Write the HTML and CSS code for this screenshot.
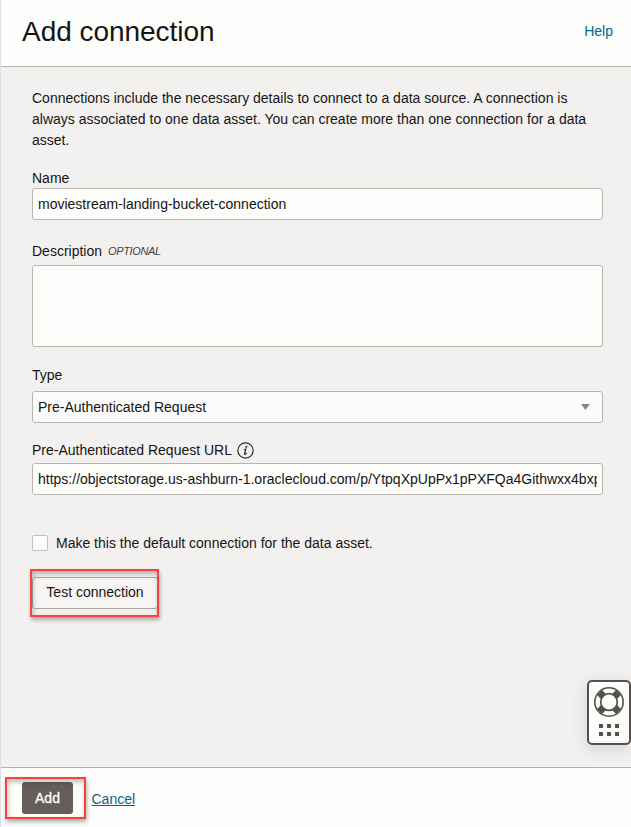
FILE: index.html
```
<!DOCTYPE html>
<html lang="en">
<head>
<meta charset="utf-8">
<title>Add connection</title>
<link rel="stylesheet" href="styles.css">
</head>
<body>
<div class="panel">
  <header class="header">
    <h1 class="title">Add connection</h1>
    <a class="help">Help</a>
  </header>
  <main class="content">
    <p class="intro">Connections include the necessary details to connect to a data source. A connection is always associated to one data asset. You can create more than one connection for a data asset.</p>
    <div class="field field-name">
      <div class="label">Name</div>
      <div class="control"><span class="value">moviestream-landing-bucket-connection</span></div>
    </div>
    <div class="field field-description">
      <div class="label">Description <span class="optional">OPTIONAL</span></div>
      <div class="control area"></div>
    </div>
    <div class="field field-type">
      <div class="label">Type</div>
      <div class="control select"><span class="value">Pre-Authenticated Request</span>
        <svg class="arrow" width="9" height="6" viewBox="0 0 9 6"><path d="M0 0h9L4.5 6z" fill="#85888a"/></svg>
      </div>
    </div>
    <div class="field field-url">
      <div class="label">Pre-Authenticated Request URL
        <svg class="info" width="18" height="18" viewBox="0 0 18 18"><circle cx="8.5" cy="9.5" r="7.7" fill="none" stroke="#312d2a" stroke-width="1.2"/><circle cx="9.4" cy="5.8" r="1" fill="#312d2a"/><path d="M6.9 8.7l1.9-.6-1.2 4.6q-.1.9.5.5l1.5-1.2" fill="none" stroke="#312d2a" stroke-width="1.2"/></svg>
      </div>
      <div class="control"><span class="value">https://objectstorage.us-ashburn-1.oraclecloud.com/p/YtpqXpUpPx1pPXFQa4Githwxx4bxp</span></div>
    </div>
    <div class="check-row"><span class="checkbox"></span><span>Make this the default connection for the data asset.</span></div>
    <div class="test-wrap">
      <button class="test">Test connection</button>
      <span class="mark mark-test"></span>
    </div>
  </main>
  <footer class="footer">
    <div class="add-wrap">
      <button class="add">Add</button>
      <span class="mark mark-add"></span>
    </div>
    <a class="cancel">Cancel</a>
  </footer>
  <div class="support">
    <svg width="44" height="65" viewBox="0 0 44 65">
      <rect x="1" y="1" width="42" height="63" rx="4" fill="#fdfdfc" stroke="#55504c" stroke-width="2"/>
      <path d="M12.5 12.5l19 19M31.5 12.5l-19 19" stroke="#55504c" stroke-width="7"/>
      <circle cx="22" cy="22" r="14.2" fill="none" stroke="#55504c" stroke-width="1.6"/>
      <circle cx="22" cy="22" r="8.3" fill="#fdfdfc" stroke="#55504c" stroke-width="1.7"/>
      <path d="M12 44h4v4h-4zM20 44h4v4h-4zM28 44h4v4h-4zM12 52h4v4h-4zM20 52h4v4h-4zM28 52h4v4h-4z" fill="#55504c"/>
    </svg>
  </div>
</div>
</body>
</html>
```
FILE: styles.css
```
* { box-sizing: border-box; }
body {
  margin: 0;
  font: 14px/21px "Liberation Sans", Arial, sans-serif;
  color: #161513;
}
.panel {
  position: relative;
  display: flex;
  flex-direction: column;
  height: 827px;
  border-left: 1px solid #dde0df;
  background: #f3f1f0;
  overflow: hidden;
}
.header {
  display: flex;
  flex: none;
  align-items: center;
  justify-content: space-between;
  height: 67px;
  padding: 0 18px 4px 21px;
  background: #fdfdfc;
  border-bottom: 1px solid #b9b1ac;
}
.title {
  margin: 1px 0 0;
  font-size: 28px;
  line-height: 36px;
  font-weight: 400;
  letter-spacing: -.04px;
}
.help, .cancel { color: #00688c; }
.content {
  flex: 1;
  padding: 21px 28px 0 31px;
}
.intro { margin: 0 0 17px; }
.label {
  display: flex;
  align-items: center;
  height: 20px;
}
.optional {
  margin-left: 6px;
  font-size: 11px;
  font-style: italic;
  letter-spacing: -.35px;
  color: #45403c;
}
.info { margin-left: 5px; }
.control {
  display: flex;
  align-items: center;
  height: 32px;
  padding: 0 5px;
  background: #fdfdfb;
  border: 1px solid #bab4ae;
  border-radius: 3px;
}
.value {
  flex: 1;
  overflow: hidden;
  white-space: nowrap;
}
.area { height: 82px; }
.select { background: #fcfbfc; padding-right: 12px; }
.field-name { margin-bottom: 21px; }
.field-description { margin-bottom: 18px; }
.field-description .label { height: 24px; padding-bottom: 3px; }
.field-type { margin-bottom: 17px; }
.field-type .label { height: 26px; padding-bottom: 5px; }
.field-url .label { height: 23px; padding-bottom: 3px; }
.check-row {
  display: flex;
  align-items: center;
  gap: 8px;
  margin-top: 38px;
}
.checkbox {
  width: 16px;
  height: 16px;
  margin-bottom: 1px;
  background: #fcfcfc;
  border: 1px solid #c7c5c4;
  border-radius: 2px;
}
.test-wrap {
  position: relative;
  width: 126px;
  margin-top: 23px;
}
button {
  display: block;
  height: 32px;
  padding: 0;
  font: inherit;
}
.test {
  width: 126px;
  padding-bottom: 2px;
  color: #161513;
  background: #f6f5f3;
  border: 1px solid #aaa5a0;
  border-radius: 3px;
}
.mark {
  position: absolute;
  border: 2px solid #fa4141;
  box-shadow: 1px 3px 4px rgba(0,0,0,.3), inset 1px 3px 5px rgba(0,0,0,.25);
}
.mark-test { left: -2px; top: -8px; width: 129px; height: 48px; }
.footer {
  display: flex;
  flex: none;
  height: 60px;
  padding: 14px 0 0 21px;
  gap: 19px;
  background: #fdfdfc;
  border-top: 1px solid #b9b1ac;
}
.add-wrap { position: relative; width: 51px; }
.add {
  width: 51px;
  color: #fff;
  background: #655d59;
  border: 0;
  border-radius: 3px;
  -webkit-text-stroke: .3px #fff;
}
.mark-add { left: -17px; top: -5px; width: 81px; height: 42px; }
.cancel { margin: 7px 0 0 -.5px; text-decoration: underline; }
.support {
  position: absolute;
  left: 586px;
  top: 680px;
  width: 44px;
  height: 65px;
  border-radius: 5px;
  box-shadow: 0 4px 18px rgba(0,0,0,.13);
}
.support svg { display: block; }
```
